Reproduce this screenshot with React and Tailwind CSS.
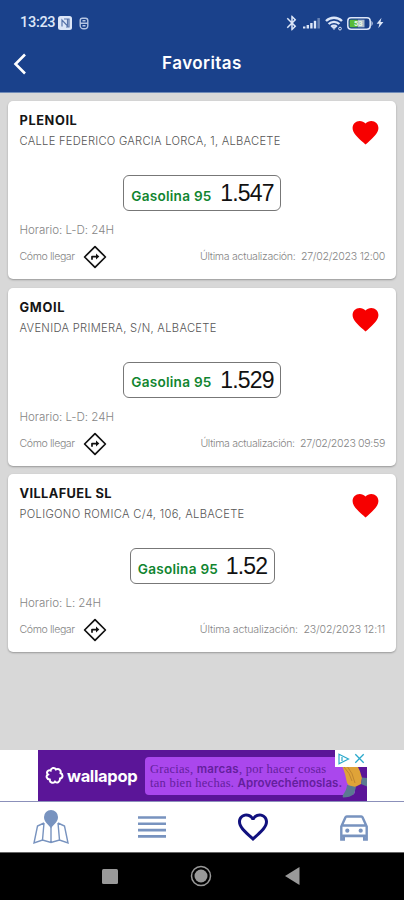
import React from 'react';
import { MdFavorite, MdFavoriteBorder, MdBluetooth } from 'react-icons/md';

const stations = [
  {
    name: 'PLENOIL',
    nameClass: 'tracking-[0.6px]',
    address: 'CALLE FEDERICO GARCIA LORCA, 1, ALBACETE',
    addressClass: 'tracking-[0.25px]',
    fuel: 'Gasolina 95',
    price: '1.547',
    schedule: 'L-D: 24H',
    updated: '27/02/2023 12:00',
    dateClass: 'tracking-[-0.28px]',
    boxClass: 'w-[158px]'
  },
  {
    name: 'GMOIL',
    nameClass: 'tracking-[0.7px]',
    address: 'AVENIDA PRIMERA, S/N, ALBACETE',
    addressClass: 'tracking-[0.3px]',
    fuel: 'Gasolina 95',
    price: '1.529',
    schedule: 'L-D: 24H',
    updated: '27/02/2023 09:59',
    dateClass: 'tracking-[-0.34px]',
    boxClass: 'w-[158px]'
  },
  {
    name: 'VILLAFUEL SL',
    nameClass: 'tracking-[0.4px]',
    address: 'POLIGONO ROMICA C/4, 106, ALBACETE',
    addressClass: 'tracking-[0.3px]',
    fuel: 'Gasolina 95',
    price: '1.52',
    schedule: 'L: 24H',
    updated: '23/02/2023 12:11',
    dateClass: 'tracking-[-0.17px]',
    boxClass: 'w-[145px]'
  }
];

const DirectionsIcon = () => (
  <svg className="w-[24px] h-[24px] shrink-0" viewBox="0 0 24 24" fill="none" stroke="#111" strokeLinejoin="round">
    <path d="M12 1.6 22.4 12 12 22.4 1.6 12z" strokeWidth="1.7" />
    <path d="M9 14.8v-3.2h5" strokeWidth="1.7" />
    <path d="M13 8.6 16.3 11.6 13 14.6z" fill="#111" stroke="none" />
  </svg>
);

const StationCard = ({ station }) => (
  <article className="h-[178px] shrink-0 bg-white rounded-[5px] shadow-[0_1px_2px_rgba(0,0,0,0.3)] pl-[11.5px] pr-[11px] pt-[10px] flex flex-col">
    <div className="flex justify-between h-[64px]">
      <div>
        <h2 className={`text-[12.8px] leading-5 font-bold text-[#151515] whitespace-nowrap ${station.nameClass}`}>{station.name}</h2>
        <p className={`text-[11.2px] leading-5 font-light text-[#555] whitespace-nowrap ${station.addressClass}`}>{station.address}</p>
      </div>
      <MdFavorite className="w-[31px] h-[31px] mt-[6px] mr-[4.5px] shrink-0 text-[#f70000]" />
    </div>

    {/* Price */}
    <div className={`h-[36px] self-center shrink-0 border border-[#777] rounded-[6px] flex items-center justify-between pl-[7px] pr-[6.5px] whitespace-nowrap ${station.boxClass}`}>
      <span className="text-[13.6px] font-semibold text-[#108530] tracking-[0.25px] pt-[6px]">{station.fuel}</span>
      <span className="font-['Liberation_Sans',sans-serif] text-[23px] leading-none text-[#111] tracking-[-0.8px] pt-[1px]">{station.price}</span>
    </div>

    <p className="mt-[9px] text-[11.6px] leading-5 font-light text-[#858585] tracking-[-0.05px]">Horario: {station.schedule}</p>
    <div className="mt-[5px] h-[24px] flex items-center text-[10.6px] font-light text-[#858585] whitespace-nowrap">
      <span className="w-[63.5px] tracking-[-0.4px]">Cómo llegar</span>
      <DirectionsIcon />
      <span className={`ml-auto ${station.dateClass}`}>Última actualización:&nbsp; {station.updated}</span>
    </div>
  </article>
);

const StatusBar = () => (
  <div className="h-[46px] flex items-center pl-[20px] pr-[20px] text-[#dce6f8]">
    <span className="font-['Roboto',sans-serif] text-[14.5px] tracking-[-0.3px] font-medium w-[37px]">13:23</span>
    <svg className="ml-[1px] w-[14px] h-[14px]" viewBox="0 0 14 14">
      <rect width="14" height="14" rx="2.5" fill="currentColor" />
      <path d="M4 10.5V4l5.5 6V3.5M6 3h5v8H8" stroke="#5975ab" strokeWidth="1.2" fill="none" />
    </svg>
    <svg className="ml-[7px] w-[10px] h-[13px]" viewBox="0 0 10 13" fill="none" stroke="currentColor" opacity="0.8">
      <path d="M1.2 6V3.5A2.3 2.3 0 0 1 3.5 1.2h3a2.3 2.3 0 0 1 2.3 2.3V8.5A3.3 3.3 0 0 1 5.5 11.8h-1A3.3 3.3 0 0 1 1.2 8.5zM1.2 6.3h7.6M3.5 3.8h3M3.5 8.8h3" strokeWidth="1.4" />
    </svg>
    <MdBluetooth className="ml-auto w-[18px] h-[18px]" />
    <svg className="ml-[1px] w-[19px] h-[14px]" viewBox="0 0 19 14" fill="currentColor">
      <rect x="1" y="10.5" width="2.4" height="2" />
      <rect x="4.6" y="9" width="2.4" height="3.5" />
      <rect x="8.2" y="7" width="2.4" height="5.5" />
      <rect x="11.8" y="4.8" width="2.4" height="7.7" />
      <rect x="15.4" y="2" width="2.5" height="10.5" opacity="0.4" />
    </svg>
    <svg className="ml-[4px] w-[18px] h-[15px]" viewBox="0 0 18 15" fill="none" stroke="currentColor" strokeWidth="2.4">
      <path d="M1 5a11.5 11.5 0 0 1 16 0M3.6 8a7.8 7.8 0 0 1 10.8 0M6.2 10.8a4 4 0 0 1 5.6 0" />
      <path d="M7.5 11.5h3l-1.5 2z" strokeWidth="1" />
      <circle cx="15" cy="12.6" r="1.4" strokeWidth="1" />
    </svg>
    <svg className="ml-[4px] w-[27px] h-[13px]" viewBox="0 0 27 13">
      <rect x="0.8" y="0.8" width="22.4" height="11.4" rx="3.2" fill="none" stroke="currentColor" strokeWidth="1.5" />
      <rect x="2.7" y="2.7" width="8" height="7.6" rx="1" fill="#58bb39" />
      <rect x="10.7" y="2.7" width="6.8" height="7.6" fill="#a9bccb" />
      <path d="M24.5 3.8q2.4 2.7 0 5.4z" fill="currentColor" />
      <text x="7" y="9.4" fontSize="7.5" fontWeight="700" fontFamily="Roboto" fill="#e9f8e2">53</text>
    </svg>
    <svg className="ml-[2px] w-[8px] h-[12px]" viewBox="0 0 8 12" fill="currentColor">
      <path d="M5.5.8.6 6.8h2.8L2.3 11.2 7.4 5H4.5z" />
    </svg>
  </div>
);

const AdBanner = () => (
  <div className="h-[51px] bg-white flex pl-[38px] shrink-0">
    <div className="relative w-[329px] h-full bg-[#5b1598] flex items-center overflow-hidden font-['Inter',sans-serif]">
      <svg className="ml-[7px] w-[19px] h-[19px] shrink-0" viewBox="0 0 19 19" fill="none" stroke="#fff" strokeWidth="2">
        <path d="M5.6 4.6C6 1.7 9.6.9 11 3.5c2.8-1.6 5.5.9 4.5 3.5 3 1.5 2.5 5.2-.5 5.6.3 3.2-3 5-5 3-2 2.4-5.6.8-5.2-2C1.5 13.3.6 9.7 3 8.5.8 6.5 2.9 3.5 5.6 4.6z" />
      </svg>
      <span className="ml-[3px] w-[72px] shrink-0 text-[16.5px] leading-5 font-bold tracking-[-0.35px] text-white">wallapop</span>
      <div className="ml-[6px] w-[210px] h-[38px] shrink-0 rounded-[4px] bg-[#aa47ed] pl-[5px] pt-[5px] font-['Liberation_Serif',serif] text-[12.5px] leading-[14px] tracking-[0.25px] text-[#64209d] whitespace-nowrap">
        <p>Gracias, <b className="font-['Inter',sans-serif] text-[11.5px] tracking-[0.2px] font-semibold">marcas</b>, por hacer cosas</p>
        <p>tan bien hechas. <b className="font-['Inter',sans-serif] text-[11.5px] font-semibold tracking-[0.05px]">Aprovechémoslas.</b></p>
      </div>
      <svg className="absolute left-[299px] top-[14px] w-[30px] h-[36px]" viewBox="0 0 30 36">
        <path d="M5 1h15q3 5 5 13l-1 6-6 3q-5 1-8-4L8 10z" fill="#dfa338" />
        <path d="M10 2q6 7 8 17M7 3q6 6 8 14" stroke="#bf8530" fill="none" />
        <path d="M25 13.5l5 .5v8.500l-6-2.500zM10 21l9 2-2 7q-4 3.500-11 3.500c-1.500-3 3.500-5 4-12.500z" fill="#5b7a91" />
      </svg>
      <div className="absolute right-0 top-0 w-[32px] h-[17px] bg-white flex items-center justify-around">
        <svg className="w-[13px] h-[12px]" viewBox="0 0 13 12" fill="none" stroke="#2aa9cb" strokeWidth="1.2">
          <path d="M2 1.2 11.5 6 2 10.8zM5 4v4" />
        </svg>
        <svg className="w-[11px] h-[11px]" viewBox="0 0 11 11" fill="none" stroke="#2aa9cb" strokeWidth="1.3">
          <path d="m1.3 1.3 8.4 8.4M9.7 1.3 1.3 9.7" />
        </svg>
      </div>
    </div>
  </div>
);

const BottomNav = () => (
  <nav className="h-[51px] shrink-0 bg-white border-t border-[#8b90ba] grid grid-cols-4 items-center justify-items-center text-[#7893bf]">
    <svg className="w-[36px] h-[36px]" viewBox="0 0 36 36" fill="none" stroke="currentColor" strokeWidth="1.4">
      <path d="M11 14 4.5 17 1 34l8.500-3 8.500 2.500 8.500-2.500 8.500 3-3.500-17-6.500-3M11 14 9.500 31M18 18v15.500M25 14l1.500 17" />
      <path d="M18 19.500c-2.200-4-7-6-7-11.500a7 7 0 0 1 14 0c0 5.500-4.800 7.500-7 11.500z" fill="currentColor" stroke="none" />
    </svg>
    <svg className="w-[28px] h-[24px]" viewBox="0 0 28 24" stroke="currentColor" strokeWidth="2.6">
      <path d="M0 2.5h28M0 8.8h28M0 15.1h28M0 21.4h28" />
    </svg>
    <MdFavoriteBorder className="w-[36px] h-[36px] text-[#11117e]" />
    <svg className="mt-[2px] w-[28px] h-[26px]" viewBox="0 0 28 26" fill="none" stroke="currentColor">
      <path d="M1.3 24.5V11.5L5.5 2.3q.3-.8 1.2-.8h14.6q.9 0 1.2.8l4.2 9.2v13h-2.5v-3.7H3.8v3.7zM2 10.5h24M2.5 21h23" strokeWidth="2.4" />
      <circle cx="7.3" cy="15.7" r="2.1" fill="currentColor" stroke="none" />
      <circle cx="20.7" cy="15.7" r="2.1" fill="currentColor" stroke="none" />
    </svg>
  </nav>
);

const App = () => (
  <div className="w-[404px] h-[900px] overflow-hidden bg-[#d8d8d8] flex flex-col font-['Inter',sans-serif]">
    <header className="h-[93px] shrink-0 bg-[#1a418b] border-b border-[#708bb8]">
      <StatusBar />
      <div className="h-[36px] grid grid-cols-3 items-center text-white">
        <svg className="ml-[13px] w-[14px] h-[22px]" viewBox="0 0 14 22" fill="none" stroke="currentColor" strokeWidth="2.6">
          <path d="M12 1.5 2.5 11 12 20.5" />
        </svg>
        <h1 className="text-center text-[17px] font-semibold tracking-[0.45px]">Favoritas</h1>
      </div>
    </header>

    <main className="flex-1 px-[8px] pt-[8px] flex flex-col gap-[8.5px]">
      {stations.map((station) => (
        <StationCard key={station.name} station={station} />
      ))}
    </main>

    <AdBanner />
    <BottomNav />

    {/* System navigation */}
    <div className="h-[48px] shrink-0 bg-black text-[#999] border-t border-[#666]">
      <svg className="w-[404px] h-[47px]" viewBox="0 0 404 47" fill="currentColor">
        <rect x="102" y="16" width="16" height="15" rx="1.5" />
        <circle cx="201" cy="23" r="9.5" fill="none" stroke="currentColor" strokeWidth="1.5" />
        <circle cx="201" cy="23" r="6.5" />
        <path d="M285 23 299.5 14v18z" />
      </svg>
    </div>
  </div>
);

export default App;
